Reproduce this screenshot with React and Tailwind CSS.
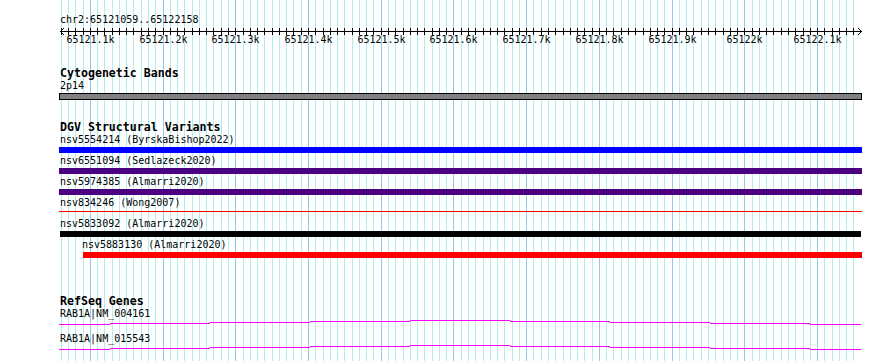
import React from 'react';

// genome coordinates -> screen x
const START = 65121059;
const PX = 800 / 1100;
const toX = (b) => Math.round(60 + (b - START) * PX);

const gridBases = Array.from({ length: 110 }, (_, i) => 65121060 + i * 10);
const rulerLabels = [
  [65121100, '65121.1k'],
  [65121200, '65121.2k'],
  [65121300, '65121.3k'],
  [65121400, '65121.4k'],
  [65121500, '65121.5k'],
  [65121600, '65121.6k'],
  [65121700, '65121.7k'],
  [65121800, '65121.8k'],
  [65121900, '65121.9k'],
  [65122000, '65122k'],
  [65122100, '65122.1k'],
];

const variants = [
  { label: 'nsv5554214 (ByrskaBishop2022)', bar: 'h-[6px] bg-[#0000ff]' },
  { label: 'nsv6551094 (Sedlazeck2020)', bar: 'h-[6px] bg-[#4b0082]' },
  { label: 'nsv5974385 (Almarri2020)', bar: 'h-[6px] bg-[#4b0082]' },
  { label: 'nsv834246 (Wong2007)', bar: 'mt-[2px] h-[1px] bg-[#ff0000]' },
  { label: 'nsv5833092 (Almarri2020)', bar: 'ml-[1px] mr-[1px] h-[6px] bg-black' },
  { label: 'nsv5883130 (Almarri2020)', bar: 'ml-[24px] h-[6px] bg-[#ff0000]', indent: 'pl-[23px]' },
];

const genes = ['RAB1A|NM_004161', 'RAB1A|NM_015543'];

// intron drawn as a shallow arch, one pixel per step
const steps = [59, 110, 210, 310, 410, 510, 610, 710, 810, 861];
const lift = [4, 3, 2, 1, 0, 1, 2, 3, 4];

const GridLines = () => (
  <svg className="absolute inset-0 pointer-events-none" width="890" height="361" shapeRendering="crispEdges">
    {gridBases.map((b) => (
      <rect
        key={b}
        x={toX(b)}
        y="0"
        width="1"
        height="361"
        fill={b % 100 === 0 ? '#8ccbee' : '#aeeeee'}
      />
    ))}
  </svg>
);

const Ruler = () => (
  <div className="relative h-[20px]">
    <svg className="absolute left-0 top-0" width="890" height="10" shapeRendering="crispEdges">
      <rect x="60" y="5" width="802" height="1" fill="#000" />
      {gridBases.map((b) => (
        <rect key={b} x={toX(b)} y="2" width="1" height="7" fill="#000" />
      ))}
      <path d="M64 2 L60.5 5.5 L64 9" fill="none" stroke="#000" strokeWidth="1" shapeRendering="auto" />
      <path d="M858 2 L861.5 5.5 L858 9" fill="none" stroke="#000" strokeWidth="1" shapeRendering="auto" />
    </svg>
    {rulerLabels.map(([b, t]) => (
      <span
        key={b}
        className="absolute top-[7.5px] -translate-x-1/2 text-[10px] leading-[12px] whitespace-nowrap"
        style={{ left: toX(b) + 0.5 }}
      >
        {t}
      </span>
    ))}
  </div>
);

const Heading = ({ children, className = '' }) => (
  <div className={`pl-[60px] text-[11.6px] leading-[14px] font-bold ${className}`}>{children}</div>
);

const App = () => {
  return (
    <div
      className="relative w-[890px] h-[361px] overflow-hidden bg-white text-black"
      style={{ fontFamily: '"DejaVu Sans Mono", "Liberation Mono", monospace' }}
    >
      <GridLines />

      <div className="relative flex flex-col">
        <div className="h-[26px] pt-[14px] pl-[60px] text-[10px] leading-[12px]">chr2:65121059..65122158</div>
        <Ruler />

        <Heading className="mt-[20px]">Cytogenetic Bands</Heading>
        <div className="pl-[60px] text-[10px] leading-[12px]">2p14</div>
        <div className="ml-[59px] w-[803px] mt-[1px] h-[7px] border border-black bg-[#808080]" />

        <Heading className="mt-[20px]">DGV Structural Variants</Heading>
        <div className="ml-[59px] w-[803px] flex flex-col">
          {variants.map((v) => (
            <div key={v.label} className="h-[21px] flex flex-col">
              <div className={`pl-[1px] text-[10px] leading-[12px] whitespace-nowrap ${v.indent || ''}`}>{v.label}</div>
              <div className={`mt-[1px] ${v.bar}`} />
            </div>
          ))}
        </div>

        <Heading className="mt-[34px]">RefSeq Genes</Heading>
        {genes.map((g) => (
          <div key={g} className="h-[25px] flex flex-col">
            <div className="pl-[60px] text-[10px] leading-[12px]">{g}</div>
            <svg width="890" height="13" shapeRendering="crispEdges">
              {lift.map((l, i) => (
                <rect key={i} x={steps[i]} y={l} width={steps[i + 1] - steps[i]} height="1" fill="#ff00ff" />
              ))}
            </svg>
          </div>
        ))}
      </div>
    </div>
  );
};

export default App;
